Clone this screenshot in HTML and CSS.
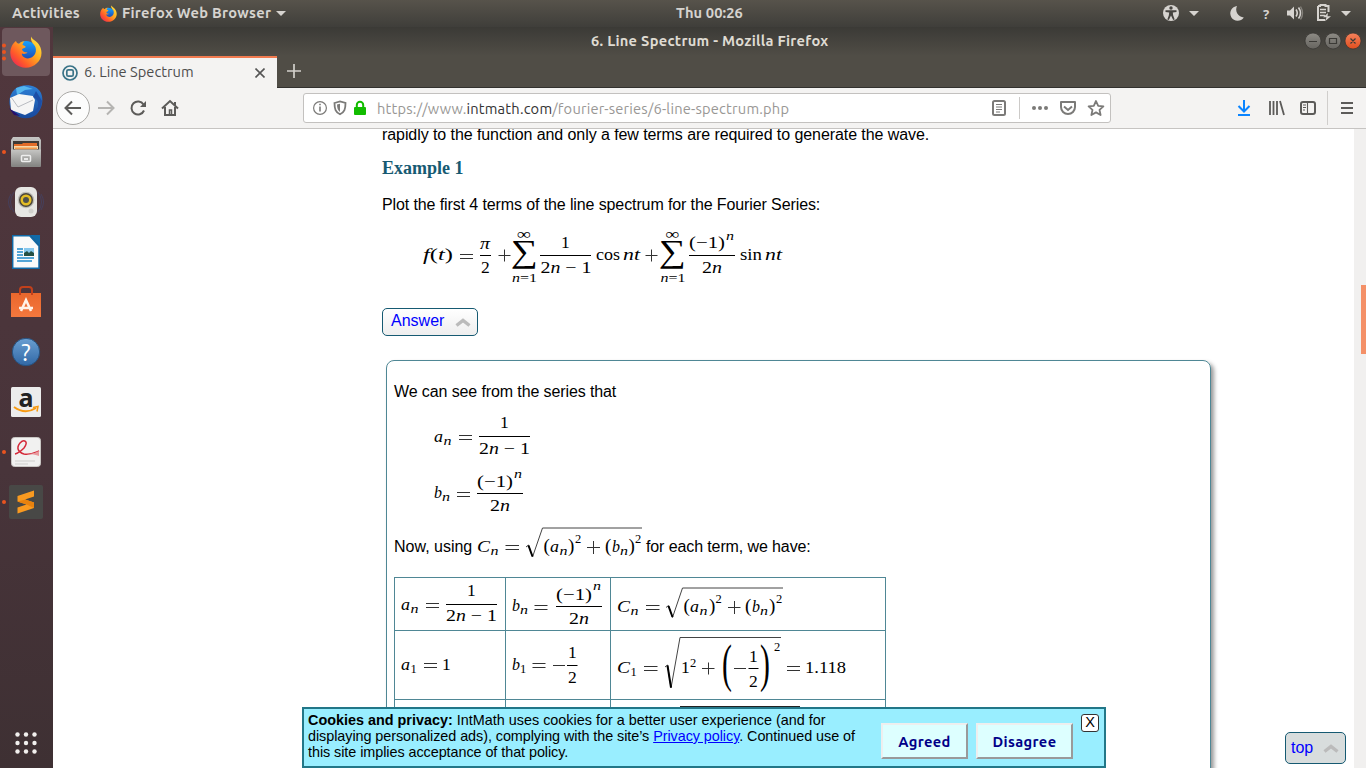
FILE: index.html
```html
<!DOCTYPE html>
<html lang="en">
<head>
<meta charset="utf-8">
<title>6. Line Spectrum</title>
<link rel="stylesheet" href="styles.css">
</head>
<body>
<svg width="0" height="0" class="defs">
  <defs>
    <linearGradient id="fox" x1="1" y1="0" x2="0" y2="1"><stop offset="0" stop-color="#fff04a"/><stop offset=".4" stop-color="#ffad1f"/><stop offset=".7" stop-color="#ff5a2a"/><stop offset="1" stop-color="#e31367"/></linearGradient>
    <linearGradient id="sea" x1="0" y1="0" x2="0" y2="1"><stop offset="0" stop-color="#16a2ff"/><stop offset="1" stop-color="#1f2f9c"/></linearGradient>
    <linearGradient id="bird" x1="0" y1="0" x2="0" y2="1"><stop offset="0" stop-color="#2d7fd6"/><stop offset="1" stop-color="#174a9c"/></linearGradient>
    <linearGradient id="steel" x1="0" y1="0" x2="0" y2="1"><stop offset="0" stop-color="#c6c6c4"/><stop offset="1" stop-color="#858583"/></linearGradient>
    <linearGradient id="orange" x1="0" y1="0" x2="0" y2="1"><stop offset="0" stop-color="#e9672c"/><stop offset="1" stop-color="#f4783e"/></linearGradient>
    <linearGradient id="help" x1="0" y1="0" x2="0" y2="1"><stop offset="0" stop-color="#6a9fd2"/><stop offset="1" stop-color="#3168a5"/></linearGradient>
    <linearGradient id="grey" x1="0" y1="0" x2="0" y2="1"><stop offset="0" stop-color="#8d8b85"/><stop offset="1" stop-color="#66645f"/></linearGradient>
    <linearGradient id="red" x1="0" y1="0" x2="0" y2="1"><stop offset="0" stop-color="#f5825c"/><stop offset="1" stop-color="#e04e1e"/></linearGradient>
    <symbol id="firefox" viewBox="0 0 32 32">
      <circle cx="16" cy="17" r="12" fill="url(#sea)"/>
      <path d="M21 .5c-.5 4 1 6 3.200 8.500 2 2.500 2.300 6 .8 9-2 4-7 5.500-10.500 3.500-2.500-1.300-3-3.500-2.500-4 1.500.8 4 .5 5.500-1-3-.3-5-1-5.500-3 .2-1 2.800-1.300 3.800-2.500-.5-1.500-2.300-1.500-3.300-2 .2-1.800 1.200-3 2.300-3.700-3 0-4.600 1.200-5.600 2.500-1.500-.3-2.700-1-3.200-2.800C2.500 7.500.3 12 .3 17c0 8.300 7 14.700 15.500 14.700S31.500 25 31.500 17c0-6-3-9.500-6-12C23.500 3.500 21.800 2.500 21 .5z" fill="url(#fox)"/>
    </symbol>
  </defs>
</svg>

<header class="topbar">
  <span class="activities">Activities</span>
  <svg class="app-logo" width="17" height="17"><use href="#firefox"/></svg>
  <span class="app-name">Firefox Web Browser</span>
  <svg class="caret" width="10" height="5"><path d="M0 0h10L5 5z"/></svg>
  <span class="clock">Thu 00:26</span>
  <svg class="tray" width="206" height="27" viewBox="1160 0 206 27">
    <circle cx="1171" cy="13" r="8"/>
    <g fill="#45433f"><circle cx="1171" cy="8" r="1.700"/><path d="M1165.500 10.300h11v1.600l-3.700.7.400 3 1.500 4-1.500.5-2.200-4.600-2.200 4.600-1.500-.5 1.500-4 .4-3-3.700-.7z"/></g>
    <path d="M1189 11h10l-5 5zM1341 11h10l-5 5z"/>
    <path d="M1237 6a7.400 7.400 0 1 0 6.800 11.500A8 8 0 0 1 1237 6z"/>
    <text x="1263" y="19" class="tray-q">?</text>
    <path d="M1287 10.500h3l4-4v13l-4-4h-3z"/><path d="M1296 9.500q2.500 3.500 0 7M1298.500 7.500q4 5.500 0 11" fill="none" stroke="#d6d3cf" stroke-width="1.600"/><path d="M1300.500 6.500q4 6.500 0 13" fill="none" stroke="#85827c" stroke-width="1.400"/>
    <path d="M1320.500 6v-1h5v1h3v6M1318 6h3M1318 6v14h7" fill="none" stroke="#d6d3cf" stroke-width="2"/><path d="M1320 9.500h6M1320 12.500h6M1320 15.500h5" stroke="#d6d3cf" stroke-width="1.600"/><path d="M1328 13l-5 4.300h3.500l-1.500 4 6-5h-3.500z"/>
  </svg>
</header>

<div class="desktop">
  <nav class="dock">
    <div class="launcher active three"><svg width="32" height="32"><use href="#firefox"/></svg></div>
    <div class="launcher"><svg width="36" height="36" viewBox="0 0 36 36"><path d="M7 5C13 0 28-1 33 9c3 7 1 16-5 22-5 4-16 5-21-1C0 25-1 12 7 5z" fill="url(#bird)"/><path d="M8 4l8-2 9 3-8 1-8 5z" fill="#54b6ef"/><path d="M2 14l9-4 14 2 2 4-2 11-8 4-14-5z" fill="#f5f5f5"/><path d="M3 13l7 10 15-7" fill="none" stroke="#b9bcc2"/><path d="M25 13q6 2 5 10l-7 9q10-3 11-15l-6-10z" fill="#1d4ea6"/><path d="M1 24l11 8-6-1z" fill="#28106b"/></svg></div>
    <div class="launcher one"><svg width="32" height="34" viewBox="0 0 32 34"><path d="M3 2h26l2 3v26q0 1-1 1H2q-1 0-1-1V5z" fill="url(#steel)"/><path d="M3 6h26v9H3z" fill="#3f3a35"/><path d="M4 9h8l1-1h14v6H4z" fill="#e36c27"/><path d="M4 11h24v3H4z" fill="#f7d8a8"/><path d="M5 12.500h22v2H5z" fill="#f39a4b"/><path d="M1 14.500h30v16.500H1z" fill="url(#steel)"/><rect x="11.500" y="20.500" width="9" height="6" rx="1" fill="#a8a8a6" stroke="#eee" stroke-width="1.500"/><path d="M14 24h4" stroke="#fff" stroke-width="1.500"/></svg></div>
    <div class="launcher"><svg width="36" height="34" viewBox="0 0 36 34"><path d="M6 7q-7 10 0 20M3 9q-5 8 0 16M30 7q7 10 0 20M33 9q5 8 0 16" fill="none" stroke="#43446a" stroke-opacity=".7"/><rect x="7" y="2" width="22" height="30" rx="6" fill="#e6e6e3"/><circle cx="18" cy="15" r="8.300" fill="#bdbdb8"/><circle cx="18" cy="15" r="7" fill="#4b463b"/><circle cx="18" cy="15" r="5.500" fill="#e3bd25"/><circle cx="18" cy="15" r="3" fill="#4e514e"/><circle cx="23" cy="26" r="2.500" fill="#d0d0cc"/></svg></div>
    <div class="launcher"><svg width="28" height="34" viewBox="0 0 28 34"><path d="M.7.700h17L27 11v22.300H.7z" fill="#fafafa" stroke="#106aa8" stroke-width="1.500"/><path d="M18 0h10v11z" fill="#106aa8"/><path d="M5 14h6M5 17h6M5 20h6M5 23h17M5 26h15" stroke="#54a5d6" stroke-width="2"/><path d="M12 13h10v8H12z" fill="#87c8ee"/><path d="M12 21v-3l3-2 2 2 2-2 3 2v3z" fill="#244f43"/></svg></div>
    <div class="launcher"><svg width="32" height="34" viewBox="0 0 32 34"><path d="M1 8h30v24H1z" fill="url(#orange)"/><path d="M10 10V5q0-3 3-3h6q3 0 3 3v5" fill="none" stroke="#c2401b" stroke-width="2"/><path d="M11 26l5-11 5 11M9 23h14" fill="none" stroke="#fff3e8" stroke-width="2.500"/></svg></div>
    <div class="launcher"><svg width="30" height="30" viewBox="0 0 30 30"><circle cx="15" cy="15" r="13.700" fill="url(#help)" stroke="#27527f"/><text x="15" y="23.500" text-anchor="middle" class="help-q">?</text></svg></div>
    <div class="launcher"><svg width="30" height="30" viewBox="0 0 30 30"><rect width="30" height="30" rx="1.500" fill="#ececec"/><text x="15" y="19.500" text-anchor="middle" class="amazon-a">a</text><path d="M3 20q11 8 22 1" fill="none" stroke="#f79a12" stroke-width="2"/><path d="M22 20.500l5-1-1 5" fill="none" stroke="#f79a12" stroke-width="1.500"/></svg></div>
    <div class="launcher one"><svg width="30" height="30" viewBox="0 0 30 30"><rect x=".5" y=".5" width="29" height="29" rx="3" fill="#f1f1f0" stroke="#c9c7c4"/><path d="M4 17q4-1 9-6c5-7 0-9-4-5-4 5-2 9 4 11 6 1 10-1 15-3" fill="none" stroke="#d42a3a" stroke-width="1.500"/><path d="M12 16q7 3 16-2v5q-6-2-16-3z" fill="#e89a9e"/><path d="M4 24h20M4 27h13" stroke="#cfcfcd"/></svg></div>
    <div class="launcher one"><svg width="34" height="34" viewBox="0 0 34 34"><rect width="34" height="34" rx="2" fill="#484846"/><path d="M8.500 11L25 5.500v6l-9 3 9 3v5.500L8.500 28.500v-6l9-3-9-3z" fill="#f99a20"/><path d="M8.500 16.500l8-2 8.500 3v5.500l-7.500-3.500z" fill="#e8820e"/></svg></div>
    <svg class="apps" width="24" height="24" viewBox="0 0 24 24"><g fill="#f2f0ee"><circle cx="3.500" cy="3.500" r="2.200"/><circle cx="12" cy="3.500" r="2.200"/><circle cx="20.500" cy="3.500" r="2.200"/><circle cx="3.500" cy="12" r="2.200"/><circle cx="12" cy="12" r="2.200"/><circle cx="20.500" cy="12" r="2.200"/><circle cx="3.500" cy="20.500" r="2.200"/><circle cx="12" cy="20.500" r="2.200"/><circle cx="20.500" cy="20.500" r="2.200"/></g></svg>
  </nav>

  <div class="window">
    <div class="titlebar">
      <span class="window-title">6. Line Spectrum - Mozilla Firefox</span>
      <svg class="window-controls" width="58" height="18" viewBox="1304 32 58 18"><g stroke="#353430" stroke-width=".7"><circle cx="1313" cy="41" r="8" fill="url(#grey)"/><circle cx="1333" cy="41" r="8" fill="url(#grey)"/><circle cx="1353" cy="41" r="8" fill="url(#red)"/></g><g fill="none" stroke="#3b3a36"><path d="M1309 41.500h8M1329.500 38.500h7v5h-7zM1350.500 38.500l5 5M1355.500 38.500l-5 5" stroke-width="1.200"/></g></svg>
    </div>
    <div class="tabs">
      <div class="tab">
        <svg width="16" height="16" viewBox="0 0 16 16" fill="none" stroke="#397387" stroke-width="1.700"><circle cx="8" cy="8" r="7"/><rect x="4.800" y="4.800" width="6.400" height="6.400" rx="1.500"/></svg>
        <span class="tab-title">6. Line Spectrum</span>
        <svg width="10" height="10" viewBox="0 0 10 10"><path d="M.5.500l9 9M9.500.500l-9 9" stroke="#555" stroke-width="1.600"/></svg>
      </div>
      <svg class="new-tab" width="14" height="14"><path d="M7 0v14M0 7h14" stroke="#d2d0cb" stroke-width="1.700"/></svg>
    </div>
    <div class="toolbar">
      <svg class="nav-icons" width="140" height="40" viewBox="53 88 140 40" fill="none" stroke="#5c5b59" stroke-width="2">
        <circle cx="73" cy="108" r="16.500" fill="#fcfcfc" stroke="#a9a8a5" stroke-width="1"/>
        <path d="M81 108H66M72 101.500l-6.500 6.500 6.500 6.500"/>
        <path d="M98 108h15M107 101.500l6.500 6.500-6.500 6.500" stroke="#b5b4b2"/>
        <path d="M143.500 104.500a6.500 6.500 0 1 0 .5 6" /><path d="M146 101v6h-6z" fill="#5c5b59" stroke="none"/>
        <path d="M162 108.500l8-7.500 8 7.500M165 107v8h10v-8"/><path d="M169.500 115v-5h2v5" stroke-width="1.500"/><path d="M175 102v4"/>
      </svg>
      <div class="urlbar">
        <svg width="56" height="20" viewBox="312 98 56 20" fill="none" stroke="#7b7a78"><circle cx="320" cy="108" r="6.400" stroke-width="1.200"/><path d="M320 106.500v5M320 103.800v1.500" stroke-width="1.600"/><path d="M334.500 103l5.500-1.500 5.500 1.500c0 6-1 9-5.500 11.300-4.500-2.300-5.500-5.300-5.500-11.300z" stroke-width="1.800"/><path d="M340 103.800v8.200c-2.300-1.700-2.800-4-3-7.500z" fill="#7b7a78" stroke="none"/><path d="M356.800 108v-3a3.200 3.200 0 0 1 6.400 0v3" stroke="#12bc00" stroke-width="2"/><rect x="354" y="107" width="12" height="8" rx="1" fill="#12bc00" stroke="none"/></svg>
        <span class="url">https://www.<b>intmath.com</b>/fourier-series/6-line-spectrum.php</span>
        <svg class="url-actions" width="118" height="28" viewBox="989 94 118 28" fill="none" stroke="#7b7a78"><rect x="993" y="101" width="12" height="14" rx="1.500" stroke-width="2"/><path d="M996 104.500h6M996 107h6M996 109.500h6M996 112h4"/><path d="M1019.500 97v22" stroke="#cccac8"/><g fill="#7b7a78" stroke="none"><circle cx="1034" cy="108" r="2"/><circle cx="1040" cy="108" r="2"/><circle cx="1046" cy="108" r="2"/></g><path d="M1061 102h14v5a7 7 0 0 1-14 0z" stroke-width="2" stroke-linejoin="round"/><path d="M1064 106.500l4 3.500 4-3.500" stroke-width="2"/><path d="M1096 101l2.200 4.800 5.200.6-3.900 3.500 1.100 5.100-4.600-2.600-4.600 2.600 1.100-5.100-3.900-3.500 5.200-.6z" stroke-width="1.800" stroke-linejoin="round"/></svg>
      </div>
      <svg class="tools" width="130" height="40" viewBox="1234 88 130 40" fill="none" stroke="#5c5b59" stroke-width="2"><path d="M1244 100v11M1238.500 106l5.500 5.500 5.500-5.500M1238 115h12" stroke="#0a84ff"/><path d="M1270 101v14M1273.500 101v14M1277 101v14M1280 101l4 14" stroke-width="1.800"/><rect x="1301" y="102" width="14" height="12" rx="2"/><path d="M1307.500 102v12M1303 105h3M1303 107.500h3M1303 110h2" stroke-width="1.100"/><path d="M1327.500 91v34" stroke="#d0cecc" stroke-width="1"/><path d="M1341 103h12M1341 108h12M1341 113h12"/></svg>
    </div>

    <div class="viewport">
      <main class="page">
        <p class="line intro">rapidly to the function and only a few terms are required to generate the wave.</p>
        <h3 class="example">Example 1</h3>
        <p class="line prompt">Plot the first 4 terms of the line spectrum for the Fourier Series:</p>
        <svg class="math series" width="370" height="64" viewBox="420 224 370 64">
          <text x="423" y="260" textLength="30" lengthAdjust="spacingAndGlyphs"><tspan class="i">f</tspan>(<tspan class="i">t</tspan>)</text>
          <path class="rule" d="M460 254.500h13M460 258.500h13M498.500 255.500h12M504.500 249.500v12M645.500 255.500h12M651.500 249.500v12"/>
          <path class="bar" d="M480 255.500h11M540 255.500h51M689 255.500h46"/>
          <text x="480" y="249" class="i" textLength="10" lengthAdjust="spacingAndGlyphs">π</text><text x="481" y="273">2</text>
          <text x="517" y="239" class="inf" textLength="14" lengthAdjust="spacingAndGlyphs">∞</text><text x="511" y="262" class="sum" textLength="27" lengthAdjust="spacingAndGlyphs">∑</text><text x="512" y="282" class="s" textLength="25" lengthAdjust="spacingAndGlyphs"><tspan class="i">n</tspan>=1</text>
          <text x="561" y="248">1</text><text x="540.500" y="273" textLength="51" lengthAdjust="spacingAndGlyphs">2<tspan class="i">n</tspan> − 1</text>
          <text x="596" y="260" textLength="24" lengthAdjust="spacingAndGlyphs">cos</text><text x="623" y="260" class="i" textLength="17" lengthAdjust="spacingAndGlyphs">nt</text>
          <text x="665.500" y="239" class="inf" textLength="14" lengthAdjust="spacingAndGlyphs">∞</text><text x="659" y="262" class="sum" textLength="27" lengthAdjust="spacingAndGlyphs">∑</text><text x="660.500" y="282" class="s" textLength="25" lengthAdjust="spacingAndGlyphs"><tspan class="i">n</tspan>=1</text>
          <text x="689" y="248" textLength="36" lengthAdjust="spacingAndGlyphs">(−1)</text><text x="726" y="240" class="s i" textLength="8" lengthAdjust="spacingAndGlyphs">n</text><text x="702" y="273" textLength="20" lengthAdjust="spacingAndGlyphs">2<tspan class="i">n</tspan></text>
          <text x="740" y="260" textLength="22" lengthAdjust="spacingAndGlyphs">sin</text><text x="765" y="260" class="i" textLength="17" lengthAdjust="spacingAndGlyphs">nt</text>
        </svg>
        <a class="toggle">Answer <svg width="16" height="9"><path d="M1.500 7.500L8 2.500l6.500 5" fill="none" stroke="#bbb" stroke-width="3.400"/></svg></a>

        <section class="answer">
          <p class="line">We can see from the series that</p>
          <svg class="math terms" width="120" height="112" viewBox="430 410 120 112">
            <text x="434" y="442" class="i" textLength="9" lengthAdjust="spacingAndGlyphs">a</text><text x="443.500" y="444.500" class="s i" textLength="8" lengthAdjust="spacingAndGlyphs">n</text>
            <path class="rule" d="M459 435.500h13M459 439.500h13M457 492.500h13M457 496.500h13"/>
            <path class="bar" d="M479 436.500h51M477 493.500h46"/>
            <text x="500" y="428">1</text><text x="479" y="454" textLength="51" lengthAdjust="spacingAndGlyphs">2<tspan class="i">n</tspan> − 1</text>
            <text x="434" y="498" class="i" textLength="8" lengthAdjust="spacingAndGlyphs">b</text><text x="442" y="501" class="s i" textLength="8" lengthAdjust="spacingAndGlyphs">n</text>
            <text x="477" y="487" textLength="36" lengthAdjust="spacingAndGlyphs">(−1)</text><text x="514" y="478" class="s i" textLength="8" lengthAdjust="spacingAndGlyphs">n</text><text x="490" y="511" textLength="20" lengthAdjust="spacingAndGlyphs">2<tspan class="i">n</tspan></text>
          </svg>
          <div class="sentence">
            <span>Now, using</span>
            <svg class="math" width="168" height="40" viewBox="476 523 168 40">
              <text x="477" y="552" class="i" textLength="13" lengthAdjust="spacingAndGlyphs">C</text><text x="490.500" y="555" class="s i" textLength="8" lengthAdjust="spacingAndGlyphs">n</text>
              <path class="rule" d="M505.500 545.500h13.500M505.500 549.500h13.500M587 547.500h13M593.500 541v13"/>
              <path class="root" d="M526 547l2.500-2 4 12L542.500 528H642"/><path class="hook" d="M528.500 545.500l4 11"/>
              <text x="543.500" y="552" class="p">(</text><text x="550" y="552" class="i" textLength="9" lengthAdjust="spacingAndGlyphs">a</text><text x="559.500" y="554.500" class="s i" textLength="8" lengthAdjust="spacingAndGlyphs">n</text><text x="568" y="552" class="p">)</text><text x="575" y="543" class="s">2</text>
              <text x="605" y="552" class="p">(</text><text x="612" y="552" class="i" textLength="8" lengthAdjust="spacingAndGlyphs">b</text><text x="620" y="554.500" class="s i" textLength="8" lengthAdjust="spacingAndGlyphs">n</text><text x="628.500" y="552" class="p">)</text><text x="635" y="543" class="s">2</text>
            </svg>
            <span>for each term, we have:</span>
          </div>
          <table class="values">
            <tr class="head">
              <td><svg class="math" width="110" height="52" viewBox="395 578 110 52">
                <text x="401" y="610" class="i" textLength="9" lengthAdjust="spacingAndGlyphs">a</text><text x="410.500" y="613" class="s i" textLength="8" lengthAdjust="spacingAndGlyphs">n</text>
                <path class="rule" d="M426 603.500h13M426 607.500h13"/><path class="bar" d="M446 604.500h51"/>
                <text x="467" y="596">1</text><text x="446" y="621" textLength="51" lengthAdjust="spacingAndGlyphs">2<tspan class="i">n</tspan> − 1</text></svg></td>
              <td><svg class="math" width="104" height="52" viewBox="506 578 104 52">
                <text x="512" y="611" class="i" textLength="8" lengthAdjust="spacingAndGlyphs">b</text><text x="520" y="614" class="s i" textLength="8" lengthAdjust="spacingAndGlyphs">n</text>
                <path class="rule" d="M534.500 605.500h13M534.500 609.500h13"/><path class="bar" d="M556 606.500h46"/>
                <text x="556" y="599.500" textLength="36" lengthAdjust="spacingAndGlyphs">(−1)</text><text x="593" y="590" class="s i" textLength="8" lengthAdjust="spacingAndGlyphs">n</text><text x="569" y="624" textLength="20" lengthAdjust="spacingAndGlyphs">2<tspan class="i">n</tspan></text></svg></td>
              <td><svg class="math" width="274" height="52" viewBox="611 578 274 52">
                <text x="617" y="612" class="i" textLength="13" lengthAdjust="spacingAndGlyphs">C</text><text x="630.500" y="615" class="s i" textLength="8" lengthAdjust="spacingAndGlyphs">n</text>
                <path class="rule" d="M646 605.500h13.500M646 609.500h13.500M728 607.500h12.500M734.500 601v13"/>
                <path class="root" d="M666 607.500l2.500-2 4 12L682.500 588H783"/><path class="hook" d="M668.500 606l4 11"/>
                <text x="683.500" y="612" class="p">(</text><text x="690" y="612" class="i" textLength="9" lengthAdjust="spacingAndGlyphs">a</text><text x="699.500" y="614.500" class="s i" textLength="8" lengthAdjust="spacingAndGlyphs">n</text><text x="709" y="612" class="p">)</text><text x="715.500" y="603" class="s">2</text>
                <text x="745" y="612" class="p">(</text><text x="752" y="612" class="i" textLength="8" lengthAdjust="spacingAndGlyphs">b</text><text x="760" y="614.500" class="s i" textLength="8" lengthAdjust="spacingAndGlyphs">n</text><text x="769" y="612" class="p">)</text><text x="776" y="603" class="s">2</text></svg></td>
            </tr>
            <tr class="first">
              <td><svg class="math" width="110" height="68" viewBox="395 631 110 68">
                <text x="401" y="670" class="i" textLength="9" lengthAdjust="spacingAndGlyphs">a</text><text x="410.500" y="673" class="s">1</text><path class="rule" d="M424 663.500h13M424 667.500h13"/><text x="442" y="670">1</text></svg></td>
              <td><svg class="math" width="104" height="68" viewBox="506 631 104 68">
                <text x="512" y="670" class="i" textLength="8" lengthAdjust="spacingAndGlyphs">b</text><text x="520" y="673" class="s">1</text><path class="rule" d="M532.500 663.500h13M532.500 667.500h13M553 665.500h12"/><path class="bar" d="M567 665.500h10.500"/><text x="568" y="658">1</text><text x="568" y="683">2</text></svg></td>
              <td><svg class="math" width="274" height="68" viewBox="611 631 274 68">
                <text x="617" y="673" class="i" textLength="13" lengthAdjust="spacingAndGlyphs">C</text><text x="630.500" y="676" class="s">1</text><path class="rule" d="M644 666.500h13.500M644 670.500h13.500M702 668.500h12.500M708.500 662.500v12M734 668.500h12M787 666.500h13M787 670.500h13"/><path class="bar" d="M748.500 668.500h10"/>
                <path class="root" d="M665 667l2.500-2 3.500 23L680 637.500H781"/><path class="hook" d="M667.500 665.500l3.500 22"/>
                <text x="681" y="673">1</text><text x="690" y="667" class="s">2</text>
                <text transform="translate(722 681) scale(1.700 3)">(</text><text x="749" y="662">1</text><text x="749" y="687">2</text><text transform="translate(760 681) scale(1.700 3)">)</text><text x="774" y="651" class="s">2</text>
                <text x="805" y="673" textLength="41" lengthAdjust="spacingAndGlyphs">1.118</text></svg></td>
            </tr>
            <tr class="next">
              <td></td><td></td>
              <td><svg class="math" width="274" height="68" viewBox="611 700 274 68"><path d="M680 706.500h120" stroke="#222"/></svg></td>
            </tr>
          </table>
        </section>
      </main>
      <div class="scrollbar"><div class="thumb"></div></div>

      <aside class="cookies">
        <p><b>Cookies and privacy:</b> IntMath uses cookies for a better user experience (and for<br><span class="tight">displaying personalized ads), complying with the site’s <a>Privacy policy</a>. Continued use of</span><br><span class="tight">this site implies acceptance of that policy.</span></p>
        <button class="agree">Agreed</button>
        <button class="disagree">Disagree</button>
        <span class="dismiss">X</span>
      </aside>
      <a class="toggle to-top">top <svg width="16" height="9"><path d="M1.500 7.500L8 2.500l6.500 5" fill="none" stroke="#bbb" stroke-width="3.400"/></svg></a>
    </div>
  </div>
</div>
</body>
</html>
```
FILE: styles.css
```css
* { box-sizing: border-box; }
body { margin: 0; width: 1366px; height: 768px; overflow: hidden; display: flex; flex-direction: column; font-family: "Ubuntu", "Noto Sans", sans-serif; background: #fff; }
p, h3 { margin: 0; }
svg { flex: none; display: block; }
.defs { position: absolute; }

.topbar { position: relative; flex: none; height: 27px; display: flex; align-items: center; background: linear-gradient(#57534b, #3f3e3a); color: #d6d3cf; font-size: 14.670px; line-height: 20px; font-weight: 600; white-space: nowrap; letter-spacing: .28px; }
.activities { margin: 0 0 1px 12px; width: 88px; }
.app-name { margin: 0 0 1px 5px; width: 150px; }
.caret { margin-left: 4px; fill: #d6d3cf; }
.clock { position: absolute; left: 676px; top: 3px; letter-spacing: .1px; }
.tray { margin-left: auto; fill: #d6d3cf; }
.tray-q { font: bold 13px "Noto Sans", sans-serif; }

.desktop { flex: 1; display: flex; min-height: 0; }
.dock { width: 53px; flex: none; display: flex; flex-direction: column; background: linear-gradient(#51373d, #48343a 60%, #3e3033); }
.launcher { position: relative; height: 50px; flex: none; margin: 0 3px 0 2px; display: flex; align-items: center; justify-content: center; border-radius: 4px; }
.active { height: 48px; margin-top: 1px; margin-bottom: 1px; background: #6e585d; }
.one::before, .three::before { content: ""; position: absolute; left: 0; width: 4px; height: 4px; border-radius: 50%; background: #e95420; }
.three::before { box-shadow: 0 -6.500px #e95420, 0 6.500px #e95420; }
.help-q { font: 24px "Ubuntu", "Noto Sans", sans-serif; fill: #fff; }
.amazon-a { font: bold 25px "Noto Sans", sans-serif; fill: #222; }
.apps { margin: auto 0 13px 14px; }

.window { flex: 1; min-width: 0; display: flex; flex-direction: column; }
.titlebar { height: 29px; flex: none; display: flex; align-items: center; justify-content: space-between; background: linear-gradient(#3b3a36, #504d46); color: #dfdbd2; font-weight: 700; font-size: 14.670px; line-height: 20px; letter-spacing: .26px; padding: 0 4px 1px 538px; white-space: nowrap; }
.window-title { margin-bottom: 1px; }
.tabs { height: 32px; flex: none; display: flex; background: #504d46; border-bottom: 1px solid #32312e; }
.tab { width: 224px; height: 32px; display: flex; align-items: center; background: #f4f3f2; border-top: 2px solid #f27b50; padding: 0 12px 0 9px; }
.tab-title { flex: 1; margin: 0 0 2px 6px; font-size: 14.670px; line-height: 20px; color: #4d4d4d; white-space: nowrap; }
.new-tab { margin: 8px 0 0 10px; }
.toolbar { height: 41px; flex: none; display: flex; background: #f4f3f2; border-bottom: 1px solid #c6c4c2; }
.urlbar { width: 808px; height: 30px; margin: 5px 0 0 110px; display: flex; align-items: center; background: #fff; border: 1px solid #c3c1bf; border-radius: 3px; padding: 0 3px 0 8px; }
.url { margin: 1px 0 0 9px; font-size: 14.670px; line-height: 20px; letter-spacing: .2px; color: #999795; white-space: nowrap; }
.url b { font-weight: 400; color: #333; }
.url-actions { margin-left: auto; }
.tools { margin-left: auto; margin-right: 2px; }

.viewport { position: relative; flex: 1; min-height: 0; overflow: hidden; display: flex; background: #fff; font: 16px/24px "Liberation Sans", Arial, sans-serif; color: #000; }
.page { flex: 1; padding-left: 329px; margin-top: -6px; }
.line { height: 24px; white-space: nowrap; letter-spacing: -.11px; }
.intro { letter-spacing: -.077px; }
.example { margin-top: 9px; height: 24px; font: bold 18px/24px "Liberation Serif", serif; color: #165a72; }
.prompt { margin-top: 13px; }
.series { margin: 7px 0 0 38px; }
.toggle { display: flex; align-items: center; justify-content: space-between; width: 96px; height: 28px; margin-top: 20px; padding: 0 6px 2px 8px; border: 1px solid #165a72; border-radius: 5px; color: #00f; background: linear-gradient(#fff, #eee); }
.toggle svg { position: relative; top: 1px; }
.answer { width: 825px; height: 460px; margin: 24px 0 0 4px; padding: 19px 7px; border: 1px solid #4f8795; border-radius: 8px; box-shadow: 3px 3px 4px #999; }
.terms { margin: 6px 0 0 36px; }
.sentence { display: flex; align-items: center; height: 40px; margin-top: 1px; }
.sentence span:first-child { width: 82px; }
.sentence span:last-child { margin-left: 2px; letter-spacing: -.11px; }
.sentence span { padding-top: 7px; white-space: nowrap; }
.values { margin-top: 14px; width: 492px; border-collapse: collapse; table-layout: fixed; }
.values td { padding: 0; border: 1px solid #4f8795; }
.values td:first-child { width: 111px; }
.values td:nth-child(2) { width: 105px; }

.math { font: 17.500px "Liberation Serif", serif; fill: #000; overflow: visible; }
.math text { white-space: pre; }
.i { font-style: italic; }
.s { font-size: 12.500px; }
.p { font-size: 19px; }
.inf { font-size: 15px; }
.sum { font-size: 32px; }
.rule { fill: none; stroke: #333; stroke-width: 1; }
.bar { fill: none; stroke: #000; stroke-width: 1; }
.root { fill: none; stroke: #444; stroke-width: 1; }
.hook { stroke: #000; stroke-width: 2; }

.scrollbar { width: 12px; background: #f1f0ef; padding: 156px 0 0 7px; }
.thumb { height: 69px; background: #f49067; }

.cookies { position: absolute; left: 249px; top: 578px; width: 804px; height: 61px; display: flex; background: #9ef; border: 2px solid #227788; padding: 3px 5px 0 4px; }
.cookies p { width: 573px; font-size: 14.400px; line-height: 16px; white-space: nowrap; }
.tight { letter-spacing: -.06px; }
.cookies a { color: #00f; text-decoration: underline; }
.cookies button { margin-top: 11px; height: 36px; border: 2px outset #eee; background: #dff; color: #008; font: bold 14.670px "Ubuntu", "Noto Sans", sans-serif; letter-spacing: .35px; padding: 0; }
.agree { width: 87px; }
.disagree { width: 97px; margin-left: 8px; }
.dismiss { margin: 2px 0 0 auto; width: 18px; height: 18px; border: 1px solid #333; border-radius: 3px; background: #fff; font-size: 14.500px; line-height: 15px; text-align: center; }
.to-top { position: absolute; left: 1232px; top: 603px; width: 61px; height: 32px; margin: 0; padding: 0 6px 1px 5px; background: #d8dddd; }
```
